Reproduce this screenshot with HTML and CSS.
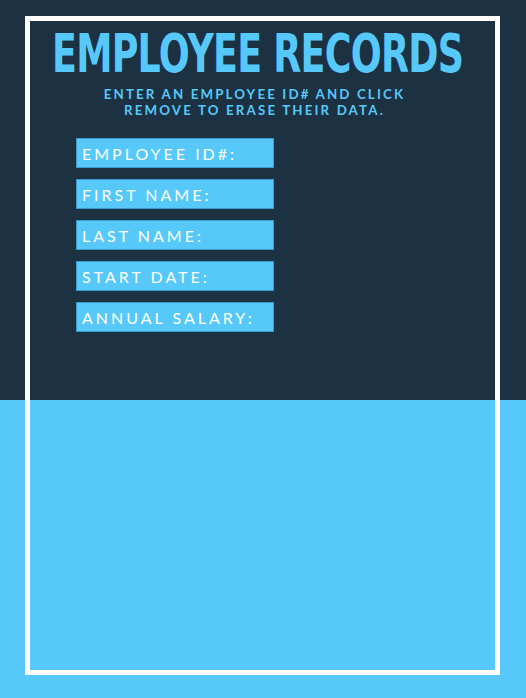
FILE: index.html
```html
<!DOCTYPE html>
<html lang="en">
<head>
<meta charset="utf-8">
<title>Employee Records</title>
<link rel="stylesheet" href="styles.css">
</head>
<body>
<main class="frame">
  <h1 class="title"><span class="title-text">EMPLOYEE RECORDS</span></h1>
  <p class="subtitle">ENTER AN EMPLOYEE ID# AND CLICK<br>REMOVE TO ERASE THEIR DATA.</p>
  <form class="fields">
    <input class="field" type="text" placeholder="EMPLOYEE ID#:">
    <input class="field" type="text" placeholder="FIRST NAME:">
    <input class="field" type="text" placeholder="LAST NAME:">
    <input class="field" type="text" placeholder="START DATE:">
    <input class="field" type="text" placeholder="ANNUAL SALARY:">
  </form>
</main>
</body>
</html>
```
FILE: styles.css
```css
html, body {
  margin: 0;
  padding: 0;
}
body {
  width: 526px;
  height: 698px;
  overflow: hidden;
  background: linear-gradient(to bottom, #1c3141 0, #1c3141 400px, #56c9fa 400px, #56c9fa 100%);
  padding-top: 16px;
  box-sizing: border-box;
}
.frame {
  margin-left: 25px;
  width: 475px;
  height: 659px;
  border: 5px solid #ffffff;
  box-sizing: border-box;
  display: flex;
  flex-direction: column;
}
.title {
  margin: 6px 0 0 22px;
  font-family: "DejaVu Sans Condensed", sans-serif;
  font-weight: 700;
  font-size: 40.5px;
  line-height: 40px;
  height: 40px;
  color: #56c9fa;
  white-space: nowrap;
}
.title-text {
  display: inline-block;
  transform: scaleY(1.333);
  transform-origin: left top;
  letter-spacing: -0.75px;
}
.subtitle {
  margin: 19px 0 0 0;
  padding-right: 16px;
  text-align: center;
  font-family: "Lato", sans-serif;
  font-weight: 700;
  font-size: 13.3px;
  line-height: 16px;
  letter-spacing: 2.15px;
  color: #56c9fa;
}
.fields {
  margin: 20px 0 0 46px;
  display: flex;
  flex-direction: column;
  gap: 11px;
}
.field {
  width: 198px;
  height: 30px;
  box-sizing: border-box;
  margin: 0;
  padding: 0 5px;
  border: 1px solid #3a9ccc;
  background: #56c9fa;
  font-family: "Lato", sans-serif;
  font-size: 16px;
  letter-spacing: 3px;
  color: #ffffff;
  outline: none;
}
.field::placeholder {
  color: #ffffff;
  opacity: 1;
}
```
